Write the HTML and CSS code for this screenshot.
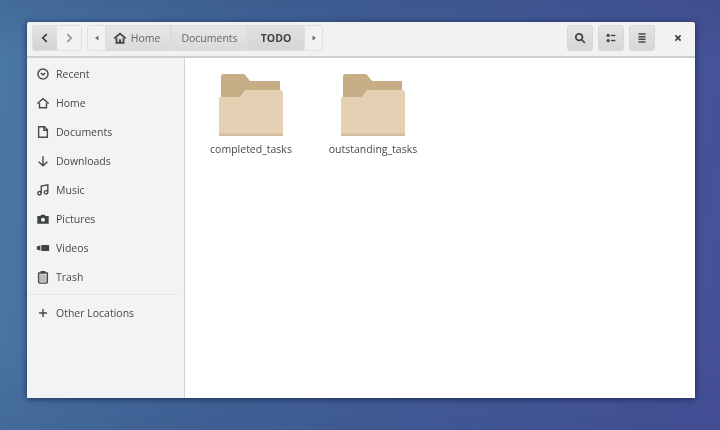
FILE: index.html
```html
<!DOCTYPE html>
<html lang="en">
<head>
<meta charset="utf-8">
<title>TODO</title>
<link rel="stylesheet" href="styles.css">
</head>
<body>
<div class="window">
  <header class="header">
    <div class="group">
      <button class="btn nav pressed"><svg class="ic" viewBox="0 0 16 16"><path d="M10 3.500 5.500 8l4.500 4.500" class="thick"/></svg></button>
      <button class="btn nav"><svg class="ic faint" viewBox="0 0 16 16"><path d="M6 3.500 10.500 8 6 12.500" class="thick"/></svg></button>
    </div>
    <div class="path">
      <button class="btn arrow"><svg class="tri" viewBox="0 0 8 8"><path d="M5.500 1.500v5L2 4z"/></svg></button>
      <button class="btn crumb home"><svg class="ic" viewBox="0 0 16 16"><path d="M1.500 8.500 8 3l6.500 5.500M4 8v5.500h8V8" class="thick"/><rect x="6.800" y="9.500" width="2.400" height="4"/></svg>Home</button>
      <button class="btn crumb docs">Documents</button>
      <button class="btn crumb todo">TODO</button>
      <button class="btn arrow"><svg class="tri" viewBox="0 0 8 8"><path d="M2.500 1.500v5L6 4z"/></svg></button>
    </div>
    <div class="tools">
      <button class="btn tool"><svg class="ic" viewBox="0 0 16 16"><circle cx="7" cy="7" r="3.800" class="thick"/><path d="m10 10 3.500 3.500" class="thick"/></svg></button>
      <button class="btn tool"><svg class="ic" viewBox="0 0 16 16"><rect x="3" y="3.500" width="3.500" height="3.200" rx="1"/><rect x="3" y="9.300" width="3.500" height="3.200" rx="1"/><rect x="8" y="4.300" width="5" height="1.600"/><rect x="8" y="10.100" width="5" height="1.600"/></svg></button>
      <button class="btn tool"><svg class="ic" viewBox="0 0 16 16"><path d="M4 3.500h8M4 6.500h8M4 9.500h8M4 12.500h8" class="thin"/></svg></button>
      <button class="close"><svg class="ic" viewBox="0 0 16 16"><path d="m5 5 6 6m0-6-6 6" class="thick"/></svg></button>
    </div>
  </header>
  <div class="main">
    <nav class="sidebar">
      <a class="row"><svg class="ic" viewBox="0 0 16 16"><circle cx="8" cy="8" r="5.800" class="thin"/><path d="M5.500 7 8 9l2.500-2" class="thin"/></svg><span>Recent</span></a>
      <a class="row"><svg class="ic" viewBox="0 0 16 16"><path d="M1.500 8.500 8 3l6.500 5.500M4 8v5.500h8V8" class="thin"/></svg><span>Home</span></a>
      <a class="row"><svg class="ic" viewBox="0 0 16 16"><path d="M3 2h6.500L13 5.500V14H3zM9 2v4h4" class="thin"/></svg><span>Documents</span></a>
      <a class="row"><svg class="ic" viewBox="0 0 16 16"><path d="M8 2.500v11M3 8.800 8 13.500l5-4.700" class="thin"/></svg><span>Downloads</span></a>
      <a class="row"><svg class="ic" viewBox="0 0 16 16"><path d="M6 11.500V3.500l7.500-1.500v8.500" class="thin"/><circle cx="4" cy="11.700" r="2" class="thin"/><circle cx="11.500" cy="10.700" r="2" class="thin"/></svg><span>Music</span></a>
      <a class="row"><svg class="ic" viewBox="0 0 16 16"><path d="M1.500 4.500h3.500l1-1.500h4l1 1.500h3.500v9h-13z"/><circle cx="8" cy="8.800" r="2.300" class="hole"/></svg><span>Pictures</span></a>
      <a class="row"><svg class="ic" viewBox="0 0 16 16"><rect x="6" y="4.500" width="9" height="7" rx="1"/><path d="M1 6.200 5 5.200v5.600l-4-1z"/></svg><span>Videos</span></a>
      <a class="row"><svg class="ic" viewBox="0 0 16 16"><rect x="4" y="5" width="8" height="8.500" class="soft"/><path d="M2.500 3.500h11M3 3.500V14l1 1h8l1-1V3.500M6 3.500V2h4v1.500" class="thin"/></svg><span>Trash</span></a>
      <div class="sep"></div>
      <a class="row"><svg class="ic" viewBox="0 0 16 16"><path d="M8 3.500v9M3.500 8h9" class="thin"/></svg><span>Other Locations</span></a>
    </nav>
    <section class="files">
      <div class="item">
        <svg class="folder" viewBox="0 0 64 63"><path class="back" d="M2 4a3 3 0 0 1 3-3h19a3 3 0 0 1 2.200 1L31 8h30v18H2z"/><path class="front" d="M0 24h21l5-7h35a3 3 0 0 1 3 3v41H0z"/><rect class="base" y="60.500" width="64" height="2.500"/></svg>
        <span class="label">completed_tasks</span>
      </div>
      <div class="item">
        <svg class="folder" viewBox="0 0 64 63"><path class="back" d="M2 4a3 3 0 0 1 3-3h19a3 3 0 0 1 2.200 1L31 8h30v18H2z"/><path class="front" d="M0 24h21l5-7h35a3 3 0 0 1 3 3v41H0z"/><rect class="base" y="60.500" width="64" height="2.500"/></svg>
        <span class="label">outstanding_tasks</span>
      </div>
    </section>
  </div>
</div>
</body>
</html>
```
FILE: styles.css
```css
* { box-sizing: border-box; }
html, body { margin: 0; height: 100%; }
body {
  width: 720px;
  height: 430px;
  overflow: hidden;
  padding: 22px 25px 32px 27px;
  background:
    linear-gradient(rgba(40, 55, 100, .2) 0, rgba(40, 55, 100, 0) 60px, rgba(40, 55, 100, 0) 340px, rgba(40, 55, 100, .14) 430px),
    linear-gradient(100deg, #4a78a6 0%, #41659a 35%, #465099 100%);
  font-family: "Open Sans", "Noto Sans", sans-serif;
  font-size: 10.5px;
  color: #43494b;
}
.window {
  height: 376px;
  display: flex;
  flex-direction: column;
  background: #fff;
  border-radius: 3px 3px 0 0;
  box-shadow: 0 1px 6px rgba(15, 25, 60, .75);
  overflow: hidden;
  filter: blur(.6px);
}
.header {
  height: 36px;
  flex: none;
  display: flex;
  align-items: center;
  padding: 0 0 2px 5px;
  background: #f2f2f1;
  border-bottom: 2px solid #cfcfcd;
}
.btn {
  height: 26px;
  padding: 0;
  margin: 0;
  display: flex;
  align-items: center;
  justify-content: center;
  font: inherit;
  color: inherit;
  border: 1px solid #e0e0de;
  background: #f2f2f1;
}
.group, .path { display: flex; }
.nav { width: 25px; border-radius: 3px; }
.pressed { background: linear-gradient(#e2e2e0, #d4d4d2); border-radius: 3px 0 0 3px; border-right: 0; }
.nav:not(.pressed) { border-radius: 0 3px 3px 0; border-left: 0; }
.path { margin-left: 5px; }
.arrow { width: 19px; }
.path .arrow:first-child { border-radius: 3px 0 0 3px; }
.path .arrow:last-child { border-radius: 0 3px 3px 0; }
.crumb { background: linear-gradient(#e6e6e4, #dadad8); border-color: #dcdcda; color: #62686a; }
.home { width: 65px; gap: 4px; padding-right: 4px; }
.docs { width: 77px; }
.todo { width: 56px; font-weight: 700; color: #3d4446; background: linear-gradient(#e0e0de, #d6d6d4); }
.tools { margin-left: auto; display: flex; align-items: center; gap: 5px; }
.tool { width: 26px; border-radius: 3px; background: linear-gradient(#e4e4e2, #d6d6d4); border-color: #d8d8d6; }
.close { width: 35px; height: 26px; padding: 0; border: 0; background: transparent; display: flex; align-items: center; justify-content: center; }
.ic { width: 14px; height: 14px; flex: none; fill: #3d4446; }
.faint { opacity: .5; }
.tri { width: 8px; height: 8px; fill: #6a6f70; }
.thick { fill: none; stroke: #3d4446; stroke-width: 2; }
.thin { fill: none; stroke: #45494b; stroke-width: 1.600; }
.hole { fill: #f3f3f2; }
.soft { fill: #b9bbbb; }
.main { flex: 1; display: flex; min-height: 0; }
.sidebar {
  width: 158px;
  flex: none;
  background: #f3f3f3;
  border-right: 1px solid #d4d4d2;
  padding-top: 1px;
}
.row {
  height: 29px;
  display: flex;
  align-items: center;
  gap: 6px;
  padding-left: 9px;
}
.sep { height: 1px; margin: 3px 5px 3px 0; background: #e6e6e4; }
.files {
  flex: 1;
  display: flex;
  align-items: flex-start;
  padding-top: 15px;
}
.item {
  width: 122px;
  display: flex;
  flex-direction: column;
  align-items: center;
  gap: 6px;
}
.item:first-child { margin-left: 5px; }
.folder { width: 64px; height: 63px; }
.back { fill: #c6ad85; }
.front { fill: #e4d1b3; }
.base { fill: #d3bf9f; }
.label { white-space: nowrap; line-height: 15px; }
```
